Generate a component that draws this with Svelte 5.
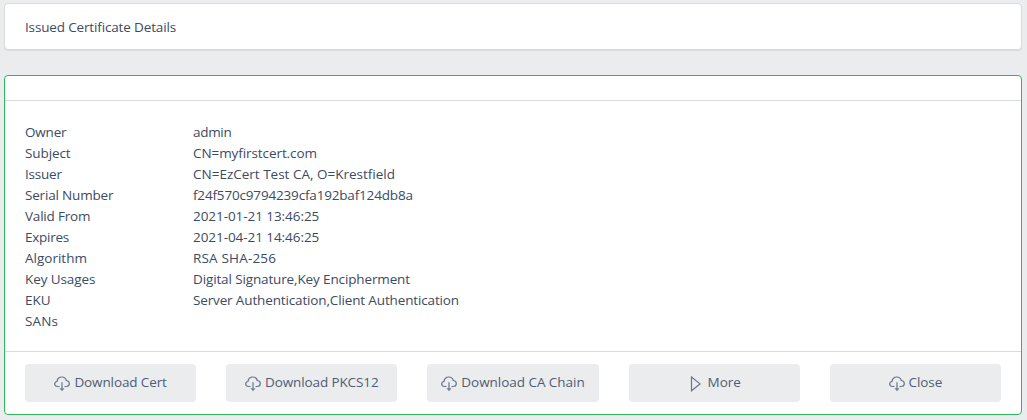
<script>
  const details = [
    { label: 'Owner', labelSpacing: -0.2, value: 'admin', spacing: -0.3 },
    { label: 'Subject', labelSpacing: -0.1, value: 'CN=myfirstcert.com', spacing: -0.08 },
    { label: 'Issuer', labelSpacing: -0.2, value: 'CN=EzCert Test CA, O=Krestfield', spacing: 0 },
    { label: 'Serial Number', labelSpacing: -0.18, value: 'f24f570c9794239cfa192baf124db8a', spacing: -0.17 },
    { label: 'Valid From', labelSpacing: -0.2, value: '2021-01-21 13:46:25', spacing: -0.06 },
    { label: 'Expires', labelSpacing: -0.25, value: '2021-04-21 14:46:25', spacing: -0.06 },
    { label: 'Algorithm', labelSpacing: 0, value: 'RSA SHA-256', spacing: 0.18 },
    { label: 'Key Usages', labelSpacing: -0.1, value: 'Digital Signature,Key Encipherment', spacing: -0.13 },
    { label: 'EKU', labelSpacing: 0, value: 'Server Authentication,Client Authentication', spacing: -0.14 },
    { label: 'SANs', labelSpacing: 0.1, value: '', spacing: 0 }
  ];
  const actions = [
    { text: 'Download Cert', icon: 'cloud', spacing: -0.12 },
    { text: 'Download PKCS12', icon: 'cloud', spacing: -0.12 },
    { text: 'Download CA Chain', icon: 'cloud', spacing: -0.04 },
    { text: 'More', icon: 'play', spacing: 0 },
    { text: 'Close', icon: 'cloud', spacing: -0.1 }
  ];
</script>

<main>
  <header class="card title"><span>Issued Certificate Details</span></header>

  <section class="card panel">
    <div class="head"></div>
    <dl>
      {#each details as row}
        <dt style:letter-spacing="{row.labelSpacing}px">{row.label}</dt>
        <dd style:letter-spacing="{row.spacing}px">{row.value}</dd>
      {/each}
    </dl>
    <footer>
      {#each actions as action}
        <button type="button">
          {#if action.icon === 'cloud'}
            <svg width="16" height="16" viewBox="0 0 16 16">
              <path d="M5.500 10.500H3.600C1.900 10.500.700 9.500.700 8c0-1.300.900-2.300 2.300-2.500C3 3 5.200 1 7.800 1c2.200 0 4 1.400 4.500 3.500 1.700.200 3 1.400 3 3 0 1.700-1.300 3-3 3h-1.800" />
              <path d="M8 6.200v7.800" />
              <path class="tip" d="M5.400 12.300h5.200L8 15.200z" />
            </svg>
          {:else}
            <svg width="16" height="16" viewBox="0 0 16 16">
              <path d="M3.500 1v13.800L12 7.900z" />
            </svg>
          {/if}
          <span style:letter-spacing="{action.spacing}px">{action.text}</span>
        </button>
      {/each}
    </footer>
  </section>
</main>

<style>
  :global(body) {
    background: #ebecee;
  }
  main {
    box-sizing: border-box;
    height: 420px;
    padding: 3px 5px 5px 4px;
    font: 13.5px/21px "Open Sans", "Noto Sans", sans-serif;
    color: #3c4b64;
    overflow: hidden;
  }
  .card {
    box-sizing: border-box;
    background: #fff;
    border: 1px solid #d8dbe0;
    border-radius: 4px;
  }
  .title {
    height: 47px;
    padding: 13px 20px 0;
    box-shadow: 0 1px 0 #d8dbe0;
    letter-spacing: -0.15px;
  }
  .panel {
    display: flex;
    flex-direction: column;
    height: 340px;
    margin-top: 25px;
    border-color: #2eb85c;
  }
  .head {
    height: 24px;
    border-bottom: 1px solid #d8dbe0;
  }
  dl {
    display: grid;
    grid-template-columns: 168px 1fr;
    grid-auto-rows: 21px;
    flex: 1;
    margin: 0;
    padding: 21px 20px 0;
    white-space: nowrap;
  }
  dd {
    margin: 0;
  }
  footer {
    display: grid;
    grid-template-columns: repeat(5, 1fr);
    gap: 30px;
    height: 62px;
    border-top: 1px solid #d8dbe0;
    padding: 0 20px;
    align-items: center;
  }
  button {
    display: flex;
    align-items: center;
    justify-content: center;
    gap: 4px;
    height: 38px;
    padding: 0 0 2px;
    border: 0;
    border-radius: 4px;
    background: #ebecee;
    color: #4f5d73;
    font: inherit;
    white-space: nowrap;
  }
  svg {
    flex: none;
    fill: none;
    stroke: #68758a;
    stroke-width: 1.200;
    margin-top: 3px;
  }
  .tip {
    fill: #768192;
    stroke: none;
  }
</style>
